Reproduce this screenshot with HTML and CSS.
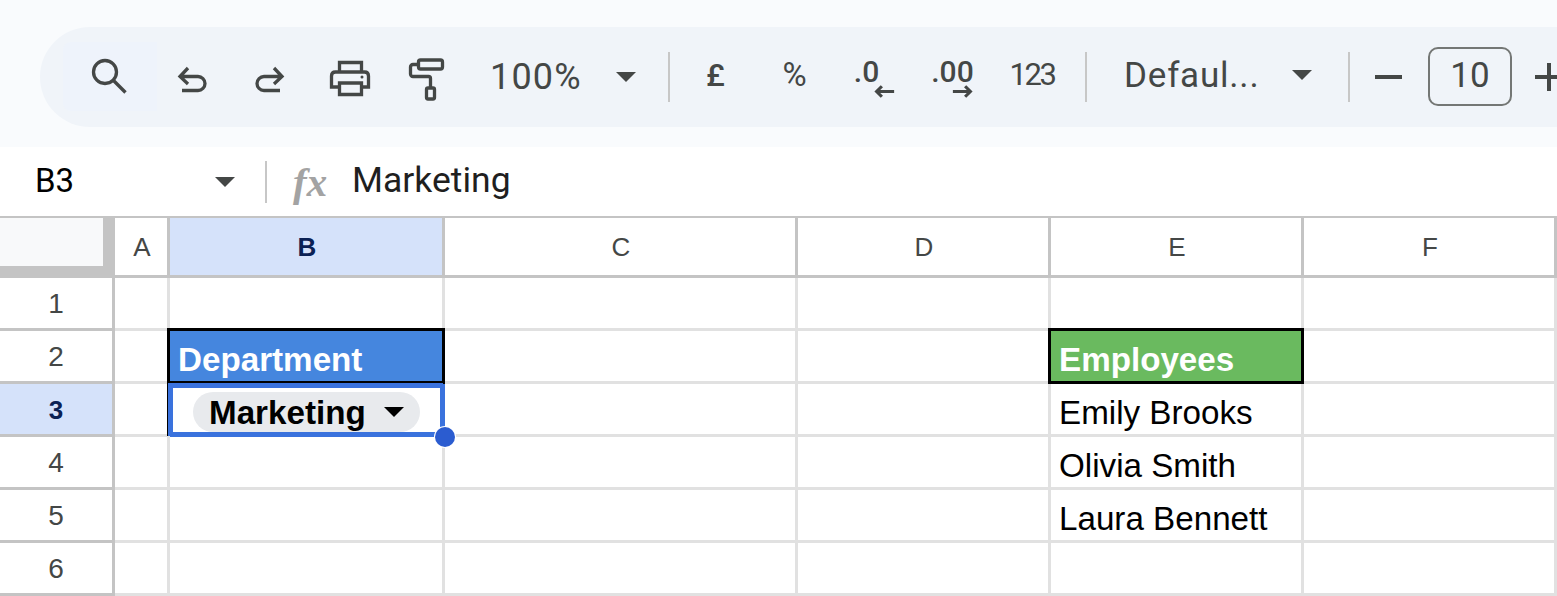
FILE: index.html
```html
<!DOCTYPE html>
<html lang="en">
<head>
    <meta charset="UTF-8">
    <title>Sheet</title>
    <link rel="stylesheet" href="styles.css">
</head>
<body>

<div id="wrapper">
    <header class="toolbar-area">
        <div class="toolbar">
            <div class="btn btn-search">
                <svg class="icon" viewBox="0 0 48 48"><circle cx="19" cy="20" r="11.500"/><path d="M27.500 28.500L39.500 40.500"/></svg>
            </div>
            <div class="btn btn-undo">
                <svg class="icon" viewBox="0 0 48 48"><path d="M19 15l-8 8.500 8 7.500M11 23.500H29a7 7 0 0 1 0 14H13"/></svg>
            </div>
            <div class="btn btn-redo">
                <svg class="icon" viewBox="0 0 48 48"><path d="M29 15l8 8.500-8 7.500M37 23.500H19a7 7 0 0 0 0 14h16"/></svg>
            </div>
            <div class="btn btn-print">
                <svg class="icon" viewBox="0 0 48 48"><path d="M14.500 19V9.500h22V19M13 34H6.500V23c0-2.500 1.500-4 4-4h29c2.500 0 4 1.500 4 4v11H37"/><path d="M14.500 30h22v11.500h-22z"/><circle class="dot" cx="37" cy="24" r="1.500"/></svg>
            </div>
            <div class="btn btn-paint">
                <svg class="icon" viewBox="0 0 48 48"><rect x="15.500" y="7" width="24" height="9" rx="2"/><path d="M15 11.500H10a2.500 2.500 0 0 0-2.500 2.500v7a2.500 2.500 0 0 0 2.500 2.500h15.500a2 2 0 0 1 2 2V35"/><rect x="23.500" y="35" width="8" height="11" rx="1.500"/></svg>
            </div>
            <div class="label zoom">100%</div>
            <div class="caret"></div>
            <div class="sep sep-1"></div>
            <div class="fmt fmt-pound">£</div>
            <div class="fmt fmt-percent">%</div>
            <div class="fmt fmt-dec">
                <span>.0</span>
                <svg class="arrow arrow-left" viewBox="0 0 24 14"><path d="M23 7H4M9 1L3 7l6 6"/></svg>
            </div>
            <div class="fmt fmt-inc">
                <span>.00</span>
                <svg class="arrow arrow-right" viewBox="0 0 24 14"><path d="M1 7h19M15 1l6 6-6 6"/></svg>
            </div>
            <div class="fmt fmt-num">123</div>
            <div class="sep sep-2"></div>
            <div class="label font-name">Defaul...</div>
            <div class="caret caret-font"></div>
            <div class="sep sep-3"></div>
            <div class="minus"></div>
            <div class="size-box">10</div>
            <div class="plus"></div>
        </div>
    </header>

    <div class="formula-bar">
        <div class="name-box">B3</div>
        <div class="caret caret-name"></div>
        <div class="formula-sep"></div>
        <div class="fx">fx</div>
        <div class="formula-text">Marketing</div>
    </div>

    <div class="grid">
        <div class="cell corner"></div>
        <div class="cell col-head">A</div>
        <div class="cell col-head active">B</div>
        <div class="cell col-head">C</div>
        <div class="cell col-head">D</div>
        <div class="cell col-head">E</div>
        <div class="cell col-head">F</div>

        <div class="cell row-head">1</div>
        <div class="cell"></div><div class="cell"></div><div class="cell"></div><div class="cell"></div><div class="cell"></div><div class="cell"></div>

        <div class="cell row-head">2</div>
        <div class="cell"></div>
        <div class="cell title title-blue">Department</div>
        <div class="cell"></div>
        <div class="cell"></div>
        <div class="cell title title-green">Employees</div>
        <div class="cell"></div>

        <div class="cell row-head active">3</div>
        <div class="cell"></div>
        <div class="cell selected">
            <div class="chip">Marketing<span class="chip-caret"></span></div>
            <div class="handle"></div>
        </div>
        <div class="cell"></div>
        <div class="cell"></div>
        <div class="cell text">Emily Brooks</div>
        <div class="cell"></div>

        <div class="cell row-head">4</div>
        <div class="cell"></div><div class="cell"></div><div class="cell"></div><div class="cell"></div>
        <div class="cell text">Olivia Smith</div>
        <div class="cell"></div>

        <div class="cell row-head">5</div>
        <div class="cell"></div><div class="cell"></div><div class="cell"></div><div class="cell"></div>
        <div class="cell text">Laura Bennett</div>
        <div class="cell"></div>

        <div class="cell row-head">6</div>
        <div class="cell"></div><div class="cell"></div><div class="cell"></div><div class="cell"></div><div class="cell"></div><div class="cell"></div>
    </div>
</div>

</body>
</html>
```

FILE: styles.css
```css
html, body {
    margin: 0;
    padding: 0;
    height: 100%;
    overflow: hidden;
    background: white;
    font-family: "Liberation Sans", sans-serif;
}

#wrapper {
    width: 1557px;
    height: 596px;
    overflow: hidden;
}

/* toolbar */

.toolbar-area {
    height: 147px;
    box-sizing: border-box;
    padding: 27px 0 0 40px;
    background: #f9fbfd;
}

.toolbar {
    display: flex;
    align-items: center;
    width: 1560px;
    height: 100px;
    box-sizing: border-box;
    padding-left: 23px;
    background: #f0f4f9;
    border-radius: 50px 0 0 50px;
    color: #444746;
    font-family: Roboto, sans-serif;
}

.btn {
    display: flex;
    justify-content: center;
    align-items: center;
    height: 69px;
    flex: none;
}

.btn-search { width: 94px; background: #eef3fb; margin-top: -2px; border-radius: 8px 0 0 8px; }
.btn-undo { width: 72px; }
.btn-redo { width: 80px; }
.btn-print { width: 80px; }
.btn-paint { width: 76px; }

.icon {
    width: 48px;
    height: 48px;
    fill: none;
    stroke: #444746;
    stroke-width: 3.300;
}

.icon .dot {
    fill: #444746;
    stroke: none;
}

.label {
    flex: none;
    font-size: 35px;
    white-space: nowrap;
}

.zoom { margin-left: 25px; width: 91px; font-size: 36px; letter-spacing: 1.200px; }

.caret {
    flex: none;
    width: 0;
    height: 0;
    border-left: 10px solid transparent;
    border-right: 10px solid transparent;
    border-top: 10px solid #444746;
    margin-left: 35px;
}

.sep {
    flex: none;
    width: 2px;
    height: 50px;
    background: #c7c7c7;
}

.sep-1 { margin-left: 32px; }
.sep-2 { margin-left: 13px; }
.sep-3 { margin-left: 36px; }

.fmt {
    flex: none;
    position: relative;
    width: 79px;
    text-align: center;
    font-size: 33px;
    line-height: 40px;
    margin-top: -4px;
}

.fmt-pound { margin-left: 6px; font-size: 32px; font-weight: 500; }
.fmt-dec span, .fmt-inc span { position: relative; top: -4px; font-size: 30px; font-weight: 500; }
.fmt-dec span { left: -7px; }
.fmt-num { width: 80px; font-size: 31px; letter-spacing: -2.500px; }

.arrow {
    position: absolute;
    top: 30px;
    width: 21px;
    height: 13px;
    fill: none;
    stroke: #444746;
    stroke-width: 3.600;
}

.arrow-left { left: 40px; }
.arrow-right { left: 39px; }

.font-name { margin: -4px 0 0 37px; width: 133px; letter-spacing: 0.800px; }
.caret-font { margin-top: -4px; }

.minus {
    flex: none;
    width: 27px;
    height: 4px;
    margin-left: 25px;
    background: #444746;
}

.size-box {
    flex: none;
    box-sizing: border-box;
    width: 84px;
    height: 59px;
    margin: -1px 0 0 26px;
    border: 2px solid #747775;
    border-radius: 10px;
    text-align: center;
    font-size: 35px;
    line-height: 53px;
}

.plus {
    flex: none;
    position: relative;
    width: 27px;
    height: 4px;
    margin-left: 23px;
    background: #444746;
}

.plus::after {
    content: "";
    position: absolute;
    left: 12px;
    top: -12px;
    width: 4px;
    height: 28px;
    background: #444746;
}

/* formula bar */

.formula-bar {
    display: flex;
    align-items: center;
    height: 69px;
    color: #1f1f1f;
    font-family: Roboto, sans-serif;
    font-size: 35.500px;
}

.name-box {
    width: 180px;
    margin: -3px 0 0 35px;
    color: black;
    font-size: 33px;
}

.caret-name { margin-left: 0; }

.formula-sep {
    width: 2px;
    height: 42px;
    margin-left: 30px;
    background: #c7c7c7;
}

.fx {
    width: 59px;
    margin-left: 26px;
    color: #a3a3a3;
    font-family: "Liberation Serif", serif;
    font-style: italic;
    font-weight: bold;
    font-size: 41px;
}

.formula-text { margin-top: -4px; }

/* grid */

.grid {
    display: grid;
    grid-template-columns: 115px 55px 275px 353px 253px 253px 253px;
    grid-template-rows: 60px repeat(6, 53px);
    box-sizing: border-box;
    border-top: 2px solid #c4c4c4;
    height: 380px;
    font-size: 33.200px;
    color: black;
}

.cell {
    position: relative;
    box-sizing: border-box;
    border-right: 3px solid #e1e1e1;
    border-bottom: 3px solid #e1e1e1;
    display: flex;
    align-items: center;
    min-width: 0;
    white-space: nowrap;
}

.corner {
    background: #f8f9fa;
    border-right: 12px solid #c4c4c4;
    border-bottom: 12px solid #c4c4c4;
}

.col-head, .row-head {
    justify-content: center;
    color: #444746;
    font-size: 26px;
    border-color: #c4c4c4;
}

.col-head {
    padding: 2px 0 0 2px;
}

.row-head {
    font-size: 28px;
    padding-top: 1px;
}

.col-head.active, .row-head.active {
    background: #d5e2fa;
    color: #0b2154;
    font-weight: bold;
}

.row-head.active { font-size: 26px; padding-top: 3px; }

.text { padding: 8px 0 0 8px; }

.title {
    z-index: 1;
    padding: 8px 0 0 8px;
    color: white;
    font-weight: bold;
    border-color: black;
    box-shadow: -3px 0 0 black, 0 -3px 0 black, -3px -3px 0 black;
}

.title-blue { background: #4586de; }
.title-green { background: #6aba5f; }

.selected {
    z-index: 2;
    border-style: solid;
    border-color: #3a72dd;
    border-width: 4px 5px 5px 3px;
    box-shadow: -2px -1px 0 #3a72dd, -3px -1px 0 black;
    font-weight: bold;
}

.chip {
    display: flex;
    align-items: center;
    align-self: flex-end;
    box-sizing: border-box;
    width: 227px;
    height: 40px;
    margin-left: 20px;
    padding: 2px 0 0 16px;
    border-radius: 20px;
    background: #e8eaed;
}

.chip-caret {
    width: 0;
    height: 0;
    margin: -2px 0 0 18px;
    border-left: 10px solid transparent;
    border-right: 10px solid transparent;
    border-top: 10px solid black;
}

.handle {
    position: absolute;
    right: -15px;
    bottom: -15px;
    width: 20px;
    height: 20px;
    border-radius: 50%;
    background: #2b5cd0;
    box-shadow: 0 0 0 1px white;
}
```
